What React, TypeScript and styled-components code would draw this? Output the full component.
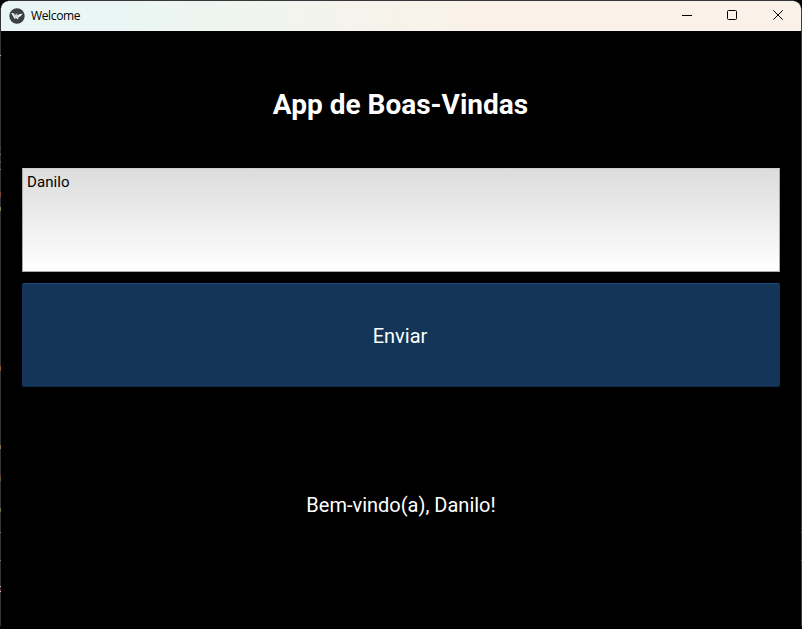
import React from "react";
import styled, { createGlobalStyle } from "styled-components";

const GlobalStyle = createGlobalStyle`
  * { box-sizing: border-box; }
  html, body { margin: 0; background: #05050c; overflow: hidden; }
`;

const speck = (y: number, h: number, color: string) =>
  `linear-gradient(${color}, ${color}) 0 ${y}px / 1px ${h}px no-repeat`;

const leftSpecks = [
  speck(55, 1, "#b4b4b8"),
  speck(148, 1, "#5f6428"),
  speck(154, 1, "#5685b0"),
  speck(161, 2, "#47525c"),
  speck(169, 1, "#6283a4"),
  speck(192, 5, "#82452f"),
  speck(207, 4, "#8f8141"),
  speck(366, 5, "#8b5b2b"),
  speck(445, 4, "#8d7548"),
  speck(475, 3, "#6b402c"),
  speck(478, 3, "#646224"),
  speck(508, 4, "#77733b"),
  speck(532, 1, "#777777"),
  speck(560, 1, "#777777"),
  speck(586, 1, "#c4bda8"),
  speck(590, 1, "#a33c42"),
  speck(591, 1, "#c8c8c8"),
].join(", ");

const Desktop = styled.div`
  display: flex;
  width: 802px;
  height: 629px;
  padding: 1px 1px 0;
  font-family: Roboto, sans-serif;
  background: ${leftSpecks},
    linear-gradient(#777, #777) 801px 532px / 1px 1px no-repeat,
    linear-gradient(#777, #777) 801px 560px / 1px 1px no-repeat,
    linear-gradient(#36363b, #36363b) 8px 0 / 786px 1px no-repeat,
    linear-gradient(#343437, #343437) 0 8px / 1px 618px no-repeat,
    linear-gradient(#3d3d3b, #3d3d3b) 801px 8px / 1px 618px no-repeat,
    #05050c;
`;

const Window = styled.main`
  display: flex;
  flex-direction: column;
  width: 800px;
  border-radius: 8px 8px 2px 2px;
  overflow: hidden;
  background: #000;
`;

const TitleBar = styled.header`
  display: flex;
  flex: none;
  align-items: center;
  height: 30px;
  padding-left: 8px;
  background: linear-gradient(90deg, #eaf6f3 0%, #eaf6f3 15%, #faf2e9 58%, #faf2e9 100%);
`;

const Caption = styled.span`
  flex: 1;
  margin-left: 6px;
  font: 12px/16px "Open Sans", sans-serif;
  letter-spacing: -0.36px;
  color: #000;
`;

const WindowButton = styled.button`
  display: flex;
  align-items: center;
  justify-content: center;
  width: 46px;
  height: 30px;
  margin: 0;
  padding: 0 0 2px;
  border: 0;
  background: transparent;
`;

const Form = styled.section`
  display: grid;
  grid-template-rows: 105px 105px 105px 1fr;
  row-gap: 10px;
  flex: 1;
  padding: 21px 21px 16px;
`;

const Heading = styled.h1`
  display: flex;
  align-items: center;
  justify-content: center;
  margin: 0 1px 0 0;
  color: #fff;
  font-size: 28px;
  line-height: 33px;
  font-weight: 700;
`;

const NameInput = styled.textarea`
  display: block;
  width: 758px;
  height: 104px;
  margin-top: 1px;
  padding: 4px;
  resize: none;
  outline: none;
  border: 1px solid #a9a9a9;
  border-top-color: #d0d0d0;
  border-radius: 0;
  background: linear-gradient(#dcdcdc, #fff);
  color: #000;
  font: 15px/18px Roboto, sans-serif;
  letter-spacing: 0.08px;
`;

const SubmitButton = styled.button`
  width: 758px;
  height: 104px;
  margin-top: 1px;
  padding: 1px 2px 0 0;
  border: 0;
  border-top: 1px solid #1b4a82;
  border-bottom: 1px solid #102c4c;
  border-radius: 2px;
  background: #143558;
  color: #fff;
  font: 20px/24px Roboto, sans-serif;
`;

const Greeting = styled.p`
  display: flex;
  align-items: center;
  justify-content: center;
  margin: 0;
  color: #fff;
  font-size: 20px;
  line-height: 24px;
`;

function AppLogo() {
  return (
    <svg width="16" height="16" viewBox="0 0 16 16">
      <circle cx="8" cy="8" r="7.7" fill="#3d4043" />
      <path d="M2.2 4.9 4.8 5.2 6.3 7.6 7 5.3 9.2 7.5 9.8 6.3 13.8 5.4 11.6 8.2 9.9 9 8.7 11.4 7.1 10 5.6 11Z" fill="#f2f5f5" />
      <path d="m4.7 5.5 1.8 4.2M7 5.7l1.6 4" stroke="#85898b" strokeWidth=".5" />
    </svg>
  );
}

const controls = [
  { label: "Minimizar", shape: <path d="M1 5.5h10" /> },
  { label: "Maximizar", shape: <rect x=".5" y=".5" width="9" height="9" rx="1" /> },
  { label: "Fechar", shape: <path d="m.3.3 9.4 9.4m0-9.4L.3 9.7" /> },
];

export default function App() {
  return (
    <>
      <GlobalStyle />
      <Desktop>
        <Window>
          <TitleBar>
            <AppLogo />
            <Caption>Welcome</Caption>
            {controls.map(({ label, shape }) => (
              <WindowButton key={label} aria-label={label}>
                <svg width="10" height="10" viewBox="0 0 10 10" fill="none" stroke="#000" overflow="visible">
                  {shape}
                </svg>
              </WindowButton>
            ))}
          </TitleBar>
          <Form>
            <Heading>App de Boas-Vindas</Heading>
            <NameInput defaultValue="Danilo" aria-label="Nome" spellCheck={false} />
            <SubmitButton>Enviar</SubmitButton>
            <Greeting>Bem-vindo(a), Danilo!</Greeting>
          </Form>
        </Window>
      </Desktop>
    </>
  );
}
